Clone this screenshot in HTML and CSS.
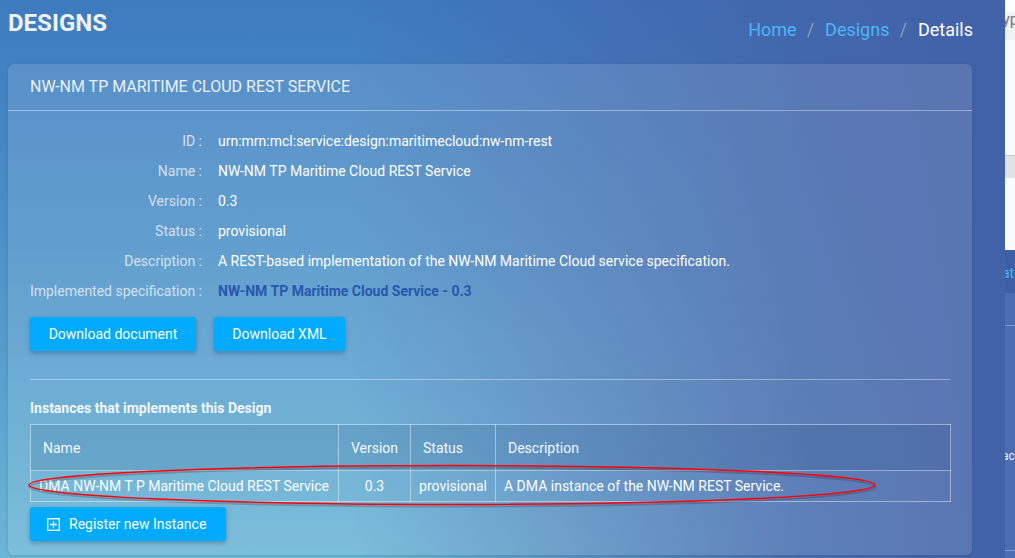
FILE: index.html
```html
<!DOCTYPE html>
<html>
<head>
<meta charset="utf-8">
<link rel="stylesheet" href="styles.css">
</head>
<body>
<div class="screen">
  <div class="page">
    <header class="topbar">
      <h1 class="title">DESIGNS</h1>
      <nav class="crumbs">
        <a class="crumb-link">Home</a><span class="sep">/</span><a class="crumb-link">Designs</a><span class="sep">/</span><span class="crumb-current">Details</span>
      </nav>
    </header>
    <section class="card">
      <div class="card-head">NW-NM TP MARITIME CLOUD REST SERVICE</div>
      <div class="card-body">
        <dl class="details">
          <dt>ID :</dt><dd>urn:mrn:mcl:service:design:maritimecloud:nw-nm-rest</dd>
          <dt>Name :</dt><dd>NW-NM TP Maritime Cloud REST Service</dd>
          <dt>Version :</dt><dd>0.3</dd>
          <dt>Status :</dt><dd>provisional</dd>
          <dt>Description :</dt><dd>A REST-based implementation of the NW-NM Maritime Cloud service specification.</dd>
          <dt>Implemented specification :</dt><dd><a class="spec-link">NW-NM TP Maritime Cloud Service - 0.3</a></dd>
        </dl>
        <div class="actions">
          <button class="btn btn-doc">Download document</button>
          <button class="btn btn-xml">Download XML</button>
        </div>
        <hr class="divider">
        <h2 class="sub">Instances that implements this Design</h2>
        <div class="table-wrap">
          <table class="inst">
            <colgroup>
              <col class="w-name"><col class="w-ver"><col class="w-stat"><col class="w-desc">
            </colgroup>
            <thead>
              <tr><th>Name</th><th class="c-ver">Version</th><th>Status</th><th>Description</th></tr>
            </thead>
            <tbody>
              <tr><td>DMA NW-NM T P Maritime Cloud REST Service</td><td class="center">0.3</td><td class="center">provisional</td><td>A DMA instance of the NW-NM REST Service.</td></tr>
            </tbody>
          </table>
          <svg class="mark" width="860" height="46" viewBox="0 0 860 46">
            <ellipse cx="424" cy="24" rx="423" ry="19.5" fill="none" stroke="rgba(60,0,0,0.2)" stroke-width="2" transform="translate(0.5,1)"/>
            <ellipse cx="424" cy="23" rx="423" ry="19.5" fill="none" stroke="#ff0000" stroke-width="1.5"/>
          </svg>
        </div>
        <button class="btn btn-reg">
          <svg class="plus" width="13" height="13" viewBox="0 0 13 13"><rect x="0.75" y="0.75" width="11.5" height="11.5" fill="none" stroke="#fff" stroke-width="1.3"/><path d="M6.5 3.2v6.6M3.2 6.5h6.6" stroke="#fff" stroke-width="1.3"/></svg>
          <span>Register new Instance</span>
        </button>
      </div>
    </section>
  </div>
  <aside class="other">
    <div class="o-top"><span class="o-text">typ</span></div>
    <div class="o-white"></div>
    <div class="o-band"></div>
    <div class="o-white2"></div>
    <div class="o-blue"><span class="o-cyan">ati</span></div>
    <div class="o-rows">
      <div class="o-row"></div>
      <div class="o-row o-row-text"><span>acc</span></div>
    </div>
  </aside>
</div>
</body>
</html>
```

FILE: styles.css
```css
html, body {
  margin: 0;
  padding: 0;
}
body {
  width: 1015px;
  height: 558px;
  overflow: hidden;
  font-family: Roboto, "Liberation Sans", sans-serif;
  color: #fff;
}
.screen {
  display: flex;
  width: 1015px;
  height: 558px;
}
.page {
  width: 1005px;
  height: 558px;
  box-sizing: border-box;
  padding: 0 33px 0 8px;
  background:
    linear-gradient(to right, rgba(66, 98, 168, 0) 35%, rgba(66, 98, 168, 0.85) 80%, #4262a8 100%),
    linear-gradient(to bottom, #3e7bbf 0%, #4d92c8 45%, #6ab6d6 100%);
  overflow: hidden;
}
.topbar {
  height: 64px;
  display: flex;
  justify-content: space-between;
  align-items: flex-start;
}
.title {
  margin: 0;
  padding-top: 9px;
  font-size: 24px;
  line-height: 28px;
  font-weight: 700;
  color: #eef3fb;
}
.crumbs {
  padding-top: 18px;
  font-size: 18px;
  line-height: 24px;
  margin-right: -1px;
}
.crumb-link {
  color: #4db5f7;
}
.sep {
  color: #8c9bbb;
  padding: 0 11px 0 10px;
}
.crumb-current {
  color: #ffffff;
}
.card {
  border-radius: 6px;
  background: rgba(255, 255, 255, 0.12);
  box-shadow: 0 1px 4px rgba(0, 0, 0, 0.12);
  height: 491px;
}
.card-head {
  height: 46px;
  line-height: 46px;
  padding: 0 22px;
  font-size: 16px;
  color: #eaf0f9;
  border-bottom: 1px solid rgba(255, 255, 255, 0.4);
}
.card-body {
  padding: 15px 22px 14px;
}
.details {
  display: grid;
  grid-template-columns: 172px 1fr;
  column-gap: 16px;
  margin: 0;
  font-size: 14px;
  line-height: 30px;
}
.details dt {
  display: flex;
  justify-content: flex-end;
  white-space: nowrap;
  color: #d3e1f1;
}
.details dd {
  margin: 0;
  color: #ffffff;
  white-space: nowrap;
}
.spec-link {
  color: #2658ae;
  font-weight: 700;
}
.actions {
  display: flex;
  gap: 18px;
  margin-top: 11px;
}
.btn {
  border: 0;
  border-radius: 3px;
  background: #00abff;
  color: #fff;
  font-family: Roboto, "Liberation Sans", sans-serif;
  font-size: 14px;
  height: 34px;
  padding: 0 17px;
  box-shadow: 0 2px 5px rgba(0, 30, 70, 0.3);
}
.btn-doc { width: 166px; }
.btn-xml { width: 131px; }
.divider {
  border: 0;
  border-top: 1px solid rgba(255, 255, 255, 0.38);
  margin: 28px 0 0;
}
.sub {
  margin: 18px 0 0;
  font-size: 14px;
  line-height: 20px;
  font-weight: 700;
  color: #f2f7fc;
}
.table-wrap {
  position: relative;
  margin-top: 6px;
}
.inst {
  width: 920px;
  border-collapse: collapse;
  font-size: 14px;
  table-layout: fixed;
}
.w-name { width: 308px; }
.w-ver { width: 72px; }
.w-stat { width: 85px; }
.w-desc { width: 455px; }
.inst th, .inst td {
  border: 1px solid rgba(255, 255, 255, 0.42);
  box-sizing: border-box;
}
.inst thead tr {
  background: rgba(20, 60, 110, 0.12);
}
.inst th {
  height: 46px;
  text-align: left;
  font-weight: 400;
  padding: 0 12px;
  color: #f3f7fb;
}
.inst th.c-ver { text-align: center; padding: 0; }
.inst td {
  height: 31px;
  padding: 0 8px;
  color: #fbfdff;
  white-space: nowrap;
  overflow: hidden;
}
.inst td.center {
  text-align: center;
  padding: 0;
}
.mark {
  position: absolute;
  left: -2px;
  top: 38px;
  overflow: visible;
}
.btn-reg {
  display: flex;
  align-items: center;
  gap: 9px;
  width: 196px;
  margin-top: 5px;
}
.plus {
  flex: none;
}
.other {
  width: 10px;
  height: 558px;
  overflow: hidden;
  background: #4a6ab0;
  box-shadow: inset 1px 0 1px rgba(0, 0, 0, 0.25);
  display: flex;
  flex-direction: column;
}
.o-top {
  height: 40px;
  background: #f2f2f2;
  border-top: 12px solid #ffffff;
  box-sizing: border-box;
  font-size: 16px;
  line-height: 24px;
  color: #777;
  white-space: nowrap;
}
.o-text {
  display: block;
  margin-left: -8px;
  margin-top: -4px;
}
.o-white {
  height: 115px;
  background: #fafafa;
}
.o-band {
  height: 22px;
  background: #e2e2e2;
  border-top: 1px solid #c8c8c8;
}
.o-white2 {
  height: 72px;
  background: #fafafa;
}
.o-blue {
  height: 43px;
  background: #3e5fa6;
  font-size: 14px;
  line-height: 22px;
  color: #3fb6ef;
  white-space: nowrap;
  box-sizing: border-box;
  padding-top: 12px;
}
.o-cyan {
  display: block;
  margin-left: -3px;
}
.o-rows {
  flex: 1;
  background: #4c6db2;
}
.o-row {
  height: 32px;
  border-bottom: 1px solid rgba(255, 255, 255, 0.3);
}
.o-row-text {
  height: 225px;
  font-size: 12px;
  color: #e8eef8;
  white-space: nowrap;
  padding-top: 123px;
  box-sizing: border-box;
}
.o-row-text span {
  display: block;
  margin-left: -3px;
}
```
